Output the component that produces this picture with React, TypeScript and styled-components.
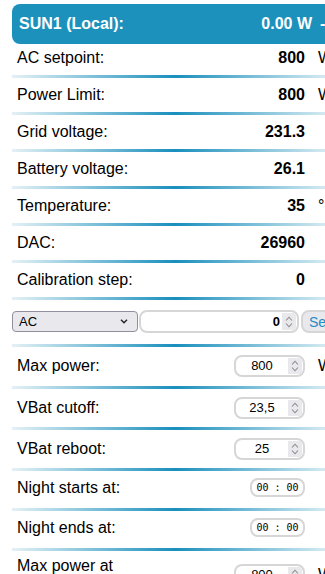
import React from "react";
import styled, { createGlobalStyle } from "styled-components";

const GlobalStyle = createGlobalStyle`
  html, body {
    margin: 0;
    overflow: hidden;
    background: #fff;
  }
  body {
    font-family: "Liberation Sans", Arial, sans-serif;
    color: #000;
  }
`;

const Page = styled.div`
  padding: 4px 0 0 12px;
`;

const Panel = styled.div`
  width: 326px;
`;

const Header = styled.div`
  display: grid;
  grid-template-columns: 1fr auto 18px;
  column-gap: 8px;
  align-items: center;
  height: 40px;
  padding-left: 7px;
  background: #1c91bc;
  border-radius: 8px;
  color: #fff;
  font-size: 16px;
  font-weight: bold;
`;

const Row = styled.div<{ $pt?: number; $pb?: number }>`
  display: grid;
  grid-template-columns: 1fr auto 20px;
  column-gap: 13px;
  align-items: center;
  padding: ${({ $pt }) => $pt ?? 8}px 0 ${({ $pb }) => $pb ?? 11}px 5px;
  font-size: 16px;
  line-height: 18px;
  background: linear-gradient(to right, #e4f1f6, #1a8fbd 50%, #e4f1f6) bottom / 100% 3px
    no-repeat;
`;

const Label = styled.div<{ $wrap?: boolean }>`
  max-width: ${({ $wrap }) => ($wrap ? "120px" : "none")};
`;

const Value = styled.div`
  font-weight: bold;
  text-align: right;
`;

const Unit = styled.div`
  white-space: nowrap;
`;

const ControlRow = styled.div`
  display: flex;
  align-items: center;
  gap: 1px;
  padding: 10px 0 14px;
  background: linear-gradient(to right, #e4f1f6, #1a8fbd 50%, #e4f1f6) bottom / 100% 3px
    no-repeat;
  & > * {
    flex-shrink: 0;
  }
`;

const Select = styled.div`
  display: flex;
  align-items: center;
  justify-content: space-between;
  box-sizing: border-box;
  width: 126px;
  height: 21px;
  padding: 0 9px 0 6px;
  background: #e9e9ed;
  border: 1px solid #8f8f9d;
  border-radius: 4px;
  font-size: 13px;
`;

const FieldBox = styled.div<{ $w: number; $h?: number }>`
  display: flex;
  align-items: stretch;
  box-sizing: border-box;
  width: ${({ $w }) => $w}px;
  height: ${({ $h }) => $h ?? 22}px;
  border: 2px solid #d6d6d6;
  border-radius: 8px;
  overflow: hidden;
  background: #fff;
`;

const FieldText = styled.div<{ $align?: string; $bold?: boolean }>`
  flex: 1;
  display: flex;
  align-items: center;
  justify-content: ${({ $align }) => $align ?? "center"};
  padding: 0 2px;
  font-size: 13px;
  font-weight: ${({ $bold }) => ($bold ? "bold" : "normal")};
`;

const Spinner = styled.div`
  display: flex;
  flex-direction: column;
  align-items: center;
  justify-content: center;
  gap: 2px;
  width: 14px;
  margin: 1px 1px 1px 0;
  background: #e9e9ed;
`;

const TimeText = styled.div`
  flex: 1;
  display: flex;
  align-items: center;
  justify-content: center;
  font-family: "DejaVu Sans Mono", monospace;
  font-size: 10px;
`;

const SendButton = styled.div`
  display: flex;
  align-items: center;
  box-sizing: border-box;
  height: 23px;
  padding: 0 6px;
  margin-left: 1px;
  background: #e9e9ed;
  border: 2px solid #d6d6d6;
  border-radius: 8px;
  color: #1f8dc5;
  font-size: 14px;
`;

const ValueCell = styled.div`
  display: flex;
  justify-content: flex-end;
`;

const Chevron = ({ up }: { up?: boolean }) => (
  <svg width="8" height="5" viewBox="0 0 8 5">
    <path
      d={up ? "M1 4.5 L4 1.2 L7 4.5" : "M1 0.5 L4 3.8 L7 0.5"}
      fill="none"
      stroke="#8c8c8c"
      strokeWidth="1.1"
    />
  </svg>
);

const SpinButtons = () => (
  <Spinner>
    <Chevron up />
    <Chevron />
  </Spinner>
);

const NumberField = ({ value }: { value: string }) => (
  <FieldBox $w={71}>
    <FieldText>{value}</FieldText>
    <SpinButtons />
  </FieldBox>
);

const TimeField = () => (
  <FieldBox $w={55} $h={19}>
    <TimeText>00 : 00</TimeText>
  </FieldBox>
);

const readings = [
  { label: "AC setpoint:", value: "800", unit: "W" },
  { label: "Power Limit:", value: "800", unit: "W" },
  { label: "Grid voltage:", value: "231.3", unit: "" },
  { label: "Battery voltage:", value: "26.1", unit: "" },
  { label: "Temperature:", value: "35", unit: "°C" },
  { label: "DAC:", value: "26960", unit: "" },
  { label: "Calibration step:", value: "0", unit: "" },
];

const settings = [
  { label: "Max power:", value: "800", unit: "W", pb: 12 },
  { label: "VBat cutoff:", value: "23,5", unit: "", pb: 11 },
  { label: "VBat reboot:", value: "25", unit: "", pb: 11 },
];

export default function App() {
  return (
    <Page>
      <GlobalStyle />
      <Panel>
        <Header>
          <span>SUN1 (Local):</span>
          <span>0.00 W</span>
          <span>-</span>
        </Header>

        {readings.map((r, i) => (
          <Row key={r.label} $pt={i === 0 ? 5 : 8}>
            <Label>{r.label}</Label>
            <Value>{r.value}</Value>
            <Unit>{r.unit}</Unit>
          </Row>
        ))}

        <ControlRow>
          <Select>
            <span>AC</span>
            <svg width="8" height="5" viewBox="0 0 8 5">
              <path d="M1 0.8 L4 3.8 L7 0.8" fill="none" stroke="#222" strokeWidth="1.4" />
            </svg>
          </Select>
          <FieldBox $w={160} $h={23}>
            <FieldText $align="flex-end" $bold>
              0
            </FieldText>
            <SpinButtons />
          </FieldBox>
          <SendButton>Send</SendButton>
        </ControlRow>

        {settings.map((s) => (
          <Row key={s.label} $pt={8} $pb={s.pb}>
            <Label>{s.label}</Label>
            <ValueCell>
              <NumberField value={s.value} />
            </ValueCell>
            <Unit>{s.unit}</Unit>
          </Row>
        ))}

        <Row $pt={7} $pb={14}>
          <Label>Night starts at:</Label>
          <ValueCell>
            <TimeField />
          </ValueCell>
          <Unit />
        </Row>
        <Row $pt={7} $pb={14}>
          <Label>Night ends at:</Label>
          <ValueCell>
            <TimeField />
          </ValueCell>
          <Unit />
        </Row>
        <Row $pt={6}>
          <Label $wrap>Max power at night:</Label>
          <ValueCell>
            <NumberField value="800" />
          </ValueCell>
          <Unit>W</Unit>
        </Row>
      </Panel>
    </Page>
  );
}
